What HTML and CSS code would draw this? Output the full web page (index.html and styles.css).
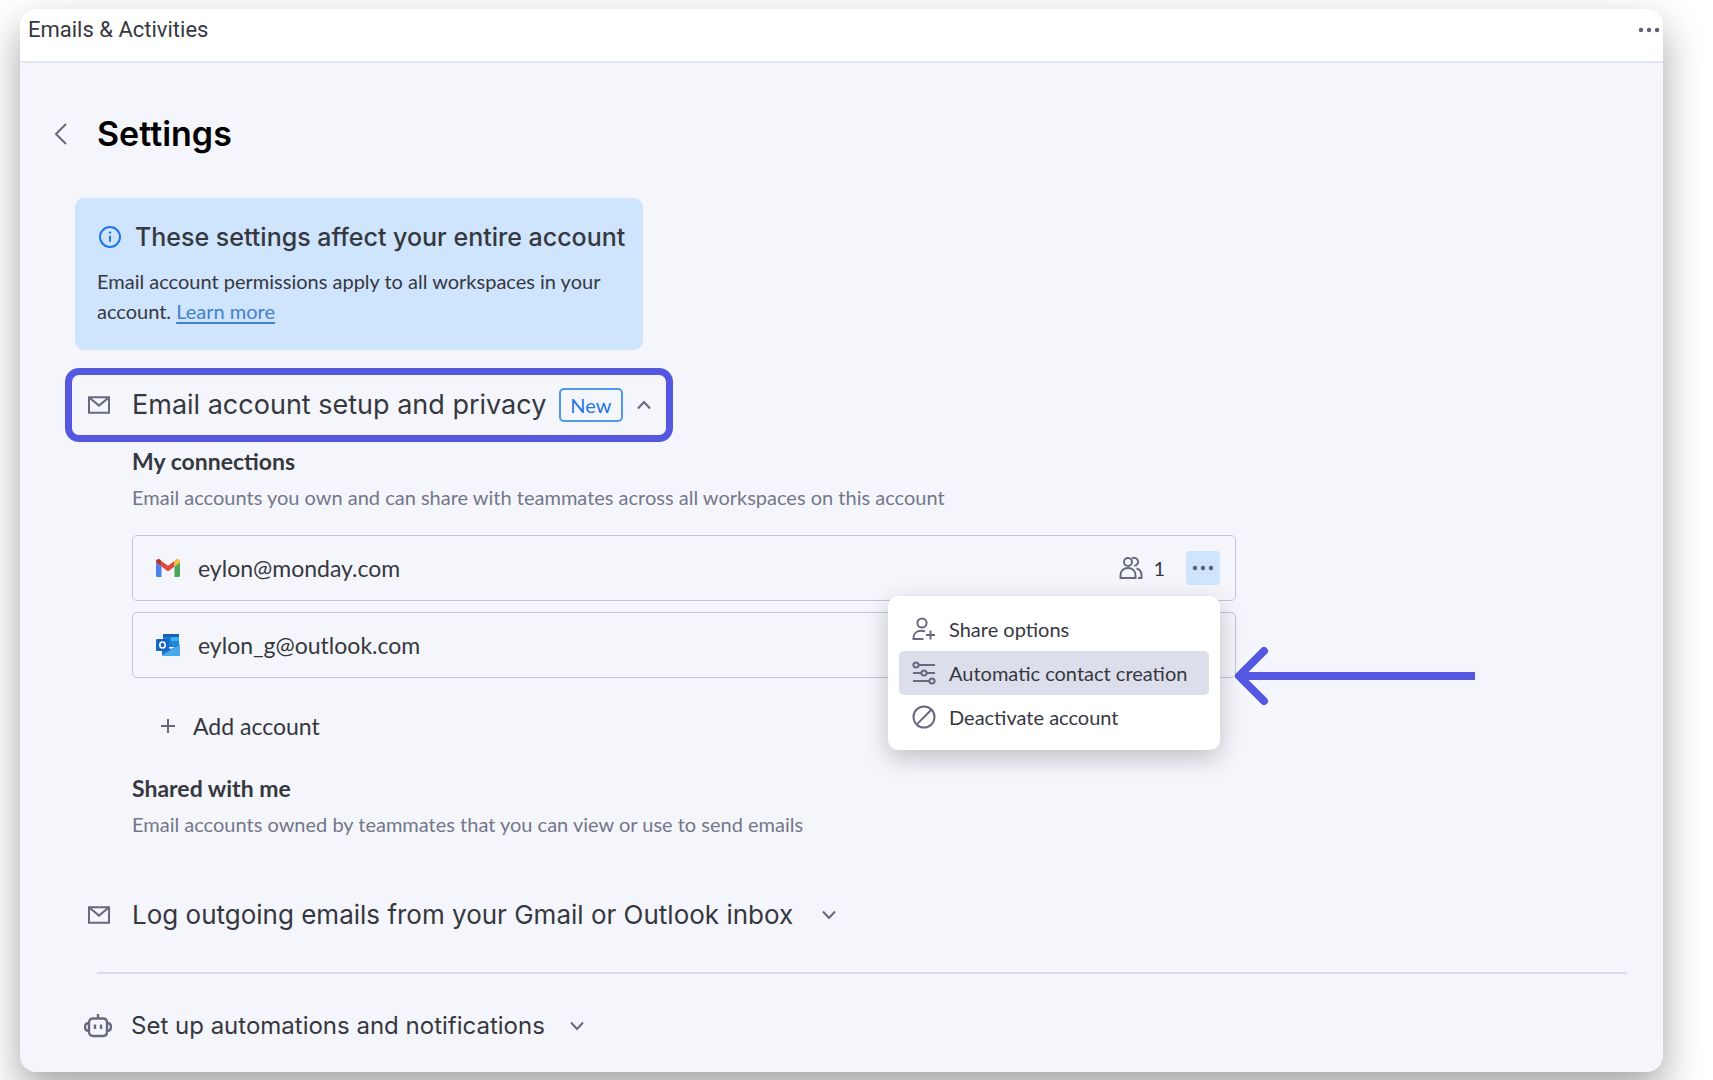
FILE: index.html
```html
<!DOCTYPE html>
<html lang="en">
<head>
<meta charset="utf-8">
<meta name="viewport" content="width=device-width, initial-scale=1">
<title>Emails &amp; Activities</title>
<link rel="stylesheet" href="styles.css">
</head>
<body>
<div class="window">
  <header class="topbar">
    <span class="topbar-title">Emails &amp; Activities</span>
    <button class="plain" type="button" aria-label="More options">
      <svg width="22" height="6" viewBox="0 0 22 6" fill="#5f6078"><circle cx="3" cy="3" r="2.2"/><circle cx="11" cy="3" r="2.2"/><circle cx="19" cy="3" r="2.2"/></svg>
    </button>
  </header>

  <main class="content">
    <div class="heading">
      <button class="plain" type="button" aria-label="Back">
        <svg class="line" width="14" height="24" viewBox="0 0 14 24"><path d="M12 2 2 12l10 10"/></svg>
      </button>
      <h1>Settings</h1>
    </div>

    <section class="notice">
      <h2 class="notice-title">
        <svg width="24" height="24" viewBox="0 0 24 24" fill="none" stroke="#1f76e8" stroke-width="2"><circle cx="13" cy="12" r="10"/><path d="M13 10.8v6"/><circle cx="13" cy="7.6" r="1.2" fill="#1f76e8" stroke="none"/></svg>
        These settings affect your entire account
      </h2>
      <p class="notice-text">Email account permissions apply to all workspaces in your account. <a href="#learn">Learn more</a></p>
    </section>

    <h2 class="section-head highlighted">
      <button class="plain section-toggle" type="button" aria-expanded="true">
        <svg class="line" width="22" height="18" viewBox="0 0 22 18"><path d="M1 1.2h20v15.6H1zM1.5 1.8 11 9.6l9.500-7.800"/></svg>
        <span class="section-title">Email account setup and privacy</span>
        <span class="badge">New</span>
        <svg class="line" width="16" height="10" viewBox="0 0 16 10"><path d="M2 8.500 8 2l6 6.500"/></svg>
      </button>
    </h2>

    <section class="panel">
      <h3>My connections</h3>
      <p class="hint">Email accounts you own and can share with teammates across all workspaces on this account</p>
      <ul class="accounts">
        <li class="account">
          <svg width="24" height="18" viewBox="0 0 24 18"><path fill="#4a83ee" d="M0 3.500 5.500 7.600V18H1.600A1.600 1.600 0 0 1 0 16.400z"/><path fill="#4ba65a" d="M24 3.500 18.500 7.600V18h3.900a1.600 1.600 0 0 0 1.600-1.600z"/><path fill="#dd4b3e" d="M5.500 1.900 12 6.800l6.500-4.900v5.700L12 12.500 5.500 7.600z"/><path fill="#b92f2b" d="M0 3.500V2.400C0 .4 2.300-.7 3.900.5l1.600 1.400v5.700L0 3.600z"/><path fill="#f4bd35" d="M24 3.500V2.400c0-2-2.300-3.100-3.900-1.900l-1.600 1.400v5.700L24 3.600z"/></svg>
          <span class="address">eylon@monday.com</span>
          <span class="shared">
            <svg class="line" width="24" height="24" viewBox="0 0 24 24"><circle cx="9" cy="6" r="4"/><path d="M1.500 22v-2.500C1.500 15 4.600 12 9 12s7.500 3 7.500 7.500V22zM13 2.400A4 4 0 1 1 15.200 9.800M17.500 12.500c3 .8 5 3.500 5 7V22h-3.500"/></svg>
            1
          </span>
          <button class="plain more" type="button" aria-label="Account options" aria-expanded="true">
            <svg width="22" height="6" viewBox="0 0 22 6" fill="#5f6078"><circle cx="3" cy="3" r="2.200"/><circle cx="11" cy="3" r="2.200"/><circle cx="19" cy="3" r="2.200"/></svg>
          </button>
          <div class="menu" role="menu">
            <button class="plain menu-item" type="button" role="menuitem">
              <svg class="line" width="24" height="24" viewBox="0 0 24 24"><circle cx="10" cy="6" r="4.600"/><path d="M11.500 22H1.500v-1.500c0-4 3.200-6.700 8-6.700 1.300 0 2.500.2 3.500.6M18.500 13.500v9M14 18h9"/></svg>
              Share options
            </button>
            <button class="plain menu-item active" type="button" role="menuitem">
              <svg class="line" width="24" height="24" viewBox="0 0 24 24"><circle cx="4" cy="4" r="2.600"/><path d="M6.600 4H23M1 12h8.400M14.600 12H23M1 20h16.400"/><circle cx="12" cy="12" r="2.600"/><circle cx="20" cy="20" r="2.600"/></svg>
              Automatic contact creation
            </button>
            <button class="plain menu-item" type="button" role="menuitem">
              <svg class="line" width="24" height="24" viewBox="0 0 24 24"><circle cx="12" cy="12" r="10.500"/><path d="M4.800 19.400 19.300 4.700"/></svg>
              Deactivate account
            </button>
          </div>
          <svg class="pointer" width="241" height="60" viewBox="0 0 241 60" fill="none" stroke="#5458e0" stroke-width="8" aria-hidden="true"><path d="M7 30h233"/><path d="M29 5 4 30l25 25" stroke-linecap="round" stroke-linejoin="round"/></svg>
        </li>
        <li class="account">
          <svg width="24" height="22" viewBox="0 0 24 22"><rect x="7" width="16" height="13" rx="1" fill="#1d7bd3"/><path d="M7 0h16v3H7z" fill="#1763b3"/><path d="M15 3h8v4h-8z" fill="#35b3f0"/><path d="M15 7h8v5h-8z" fill="#1f86dc"/><path d="m6 11 9 4 9-4.500V20.500A1.500 1.500 0 0 1 22.500 22h-15A1.500 1.500 0 0 1 6 20.500z" fill="#1f78cf"/><path d="M24 10.500 7 20.500V22h15.500a1.500 1.500 0 0 0 1.500-1.500z" fill="#4aa9ea"/><rect y="5" width="13" height="12" rx="1.200" fill="#1668c8"/><ellipse cx="6.500" cy="11" rx="2.700" ry="3" fill="none" stroke="#fff" stroke-width="1.600"/></svg>
          <span class="address">eylon_g@outlook.com</span>
        </li>
      </ul>
      <button class="plain add" type="button">
        <svg class="line" width="14" height="14" viewBox="0 0 14 14"><path d="M7 0v14M0 7h14"/></svg>
        Add account
      </button>
      <h3>Shared with me</h3>
      <p class="hint">Email accounts owned by teammates that you can view or use to send emails</p>
    </section>

    <h2 class="section-head">
      <button class="plain section-toggle" type="button" aria-expanded="false">
        <svg class="line" width="22" height="18" viewBox="0 0 22 18"><path d="M1 1.200h20v15.600H1zM1.500 1.800 11 9.600l9.500-7.800"/></svg>
        <span class="section-title">Log outgoing emails from your Gmail or Outlook inbox</span>
        <svg class="line chevron" width="16" height="10" viewBox="0 0 16 10"><path d="M2 1.500 8 8l6-6.500"/></svg>
      </button>
    </h2>
    <hr class="divider">
    <h2 class="section-head compact">
      <button class="plain section-toggle" type="button" aria-expanded="false">
        <svg class="line robot" width="28" height="24" viewBox="0 0 28 24"><path stroke-width="2.400" d="M14 0v4.500M5 8.500C5 6 6.500 4.500 9 4.500h10c2.500 0 4 1.500 4 4V18c0 2.500-1.500 4-4 4H9c-2.500 0-4-1.500-4-4zM5 9c-2.500 0-4 1.500-4 4s1.500 4 4 4M23 9c2.500 0 4 1.500 4 4s-1.500 4-4 4M11 10.500v4.500M17 10.500v4.500"/></svg>
        <span class="section-title">Set up automations and notifications</span>
        <svg class="line chevron" width="16" height="10" viewBox="0 0 16 10"><path d="M2 1.500 8 8l6-6.500"/></svg>
      </button>
    </h2>
  </main>
</div>
</body>
</html>
```

FILE: styles.css
```css
* {
  box-sizing: border-box;
}

body {
  margin: 0;
  padding: 9px 50px 8px 20px;
  background: #fff;
  color: #36383f;
  font-family: Lato, "Liberation Sans", sans-serif;
  font-size: 20px;
  line-height: 30px;
}

h1, h2, h3, p, ul {
  margin: 0;
  padding: 0;
}

svg {
  display: block;
  flex: none;
}

.line {
  fill: none;
  stroke: #686980;
  stroke-width: 2;
}

.plain {
  display: flex;
  align-items: center;
  padding: 0;
  border: 0;
  background: none;
  color: inherit;
  font: inherit;
  text-align: left;
  cursor: pointer;
}

.window {
  min-height: calc(100vh - 17px);
  border-radius: 16px;
  background: #f5f6fb;
  box-shadow: 0 18px 40px rgba(0, 0, 0, 0.36);
}

.topbar {
  display: flex;
  justify-content: space-between;
  height: 54px;
  padding: 6px 3px 16px 8px;
  border-bottom: 2px solid #e3e7f0;
  border-radius: 16px 16px 0 0;
  background: #fff;
  font-family: Roboto, sans-serif;
  font-size: 22px;
}

.content {
  padding: 50px 36px 29px 34px;
}

.heading {
  display: flex;
  align-items: center;
  gap: 29px;
}

h1 {
  color: #000;
  font: 600 34px/42px Inter, sans-serif;
}

.notice {
  width: fit-content;
  max-width: 568px;
  margin: 43px 0 18px 21px;
  padding: 21px 18px 24px 22px;
  border-radius: 9px;
  background: #cfe4fd;
}

.notice-title {
  display: flex;
  align-items: center;
  gap: 14px;
  margin-bottom: 11px;
  font: 500 25px/36px Inter, sans-serif;
  white-space: nowrap;
}

.notice-text a {
  color: #4481c9;
  text-underline-offset: 3px;
}

.section-head {
  width: fit-content;
  margin-left: 34px;
  font: 400 26px/34px Inter, sans-serif;
}

.section-toggle {
  gap: 16px;
}

.section-title {
  margin-left: 6px;
}

.chevron {
  margin-left: 12px;
}

.compact {
  font-size: 24px;
}

.compact .chevron {
  margin-left: 8px;
}

.robot {
  margin: 0 -3px 0 -4px;
}

.highlighted {
  margin-left: 11px;
  padding: 13px 14px 13px 16px;
  border: 7px solid #5458e0;
  border-radius: 14px;
  font-size: 27px;
}

.highlighted .section-toggle {
  gap: 13px;
}

.highlighted .section-title {
  margin-left: 9px;
}

.badge {
  padding: 0 9px;
  border: 2px solid #4c98f0;
  border-radius: 5px;
  color: #1f76e8;
  font: 20px/30px Lato, sans-serif;
}

.panel {
  max-width: 1182px;
  margin: 4px 0 59px;
  padding-left: 78px;
}

h3 {
  margin-bottom: 6px;
  font-size: 23px;
  font-weight: 700;
}

.hint {
  color: #74768a;
}

.accounts {
  display: grid;
  gap: 11px;
  margin: 23px 0 33px;
  list-style: none;
}

.account {
  position: relative;
  display: flex;
  align-items: center;
  gap: 18px;
  height: 66px;
  padding: 0 15px 0 23px;
  border: 1px solid #c3c5d6;
  border-radius: 5px;
  font-size: 23px;
}

.address {
  flex: 1;
}

.shared {
  display: flex;
  align-items: center;
  gap: 10px;
  margin-right: 3px;
  font-size: 20px;
}

.more {
  justify-content: center;
  width: 34px;
  height: 34px;
  border-radius: 4px;
  background: #cfe4fd;
}

.menu {
  position: absolute;
  z-index: 1;
  top: 60px;
  right: 15px;
  width: 332px;
  padding: 11px;
  border-radius: 10px;
  background: #fff;
  box-shadow: 0 8px 24px rgba(0, 0, 0, 0.22);
}

.menu-item {
  gap: 13px;
  width: 100%;
  height: 44px;
  padding: 0 13px;
  border-radius: 5px;
  font-size: 20px;
}

.active {
  background: #dcdeeb;
}

.pointer {
  position: absolute;
  z-index: 2;
  top: 110px;
  left: 100%;
}

.add {
  gap: 18px;
  margin: 0 0 32px 29px;
  font-size: 23px;
}

.divider {
  height: 2px;
  margin: 40px 0 35px 43px;
  border: 0;
  background: #dadce8;
}
```
